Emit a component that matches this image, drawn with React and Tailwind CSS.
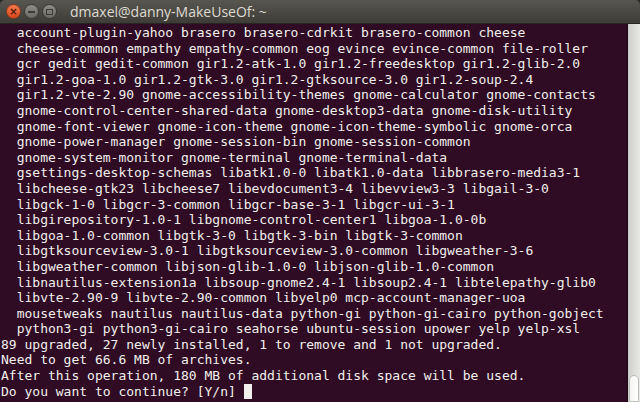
import React from 'react';

const lines = [
  '  account-plugin-yahoo brasero brasero-cdrkit brasero-common cheese',
  '  cheese-common empathy empathy-common eog evince evince-common file-roller',
  '  gcr gedit gedit-common gir1.2-atk-1.0 gir1.2-freedesktop gir1.2-glib-2.0',
  '  gir1.2-goa-1.0 gir1.2-gtk-3.0 gir1.2-gtksource-3.0 gir1.2-soup-2.4',
  '  gir1.2-vte-2.90 gnome-accessibility-themes gnome-calculator gnome-contacts',
  '  gnome-control-center-shared-data gnome-desktop3-data gnome-disk-utility',
  '  gnome-font-viewer gnome-icon-theme gnome-icon-theme-symbolic gnome-orca',
  '  gnome-power-manager gnome-session-bin gnome-session-common',
  '  gnome-system-monitor gnome-terminal gnome-terminal-data',
  '  gsettings-desktop-schemas libatk1.0-0 libatk1.0-data libbrasero-media3-1',
  '  libcheese-gtk23 libcheese7 libevdocument3-4 libevview3-3 libgail-3-0',
  '  libgck-1-0 libgcr-3-common libgcr-base-3-1 libgcr-ui-3-1',
  '  libgirepository-1.0-1 libgnome-control-center1 libgoa-1.0-0b',
  '  libgoa-1.0-common libgtk-3-0 libgtk-3-bin libgtk-3-common',
  '  libgtksourceview-3.0-1 libgtksourceview-3.0-common libgweather-3-6',
  '  libgweather-common libjson-glib-1.0-0 libjson-glib-1.0-common',
  '  libnautilus-extension1a libsoup-gnome2.4-1 libsoup2.4-1 libtelepathy-glib0',
  '  libvte-2.90-9 libvte-2.90-common libyelp0 mcp-account-manager-uoa',
  '  mousetweaks nautilus nautilus-data python-gi python-gi-cairo python-gobject',
  '  python3-gi python3-gi-cairo seahorse ubuntu-session upower yelp yelp-xsl',
  '89 upgraded, 27 newly installed, 1 to remove and 1 not upgraded.',
  'Need to get 66.6 MB of archives.',
  'After this operation, 180 MB of additional disk space will be used.',
];

const App = () => {
  return (
    <div className="w-[640px] h-[402px] flex flex-col overflow-hidden bg-[#2a2926]">
      {/* Title bar */}
      <div className="h-[24px] shrink-0 flex items-center rounded-t-[5px] bg-gradient-to-b from-[#57564f] to-[#3d3c37] border-b border-[#262522]">
        <div className="flex items-center gap-[3px] pl-[6px]">
          <div className="w-[15px] h-[15px] rounded-full bg-gradient-to-b from-[#f47a4c] to-[#d8461c] border border-[#8a3a1c] flex items-center justify-center">
            <span className="text-[10px] leading-none font-bold text-[#4a1a08]" style={{ fontFamily: '"DejaVu Sans", sans-serif' }}>×</span>
          </div>
          <div className="w-[15px] h-[15px] rounded-full bg-gradient-to-b from-[#8f8d86] to-[#6b6964] border border-[#3a3935] flex items-center justify-center">
            <div className="w-[7px] h-[2px] bg-[#3b3a36]" />
          </div>
          <div className="w-[15px] h-[15px] rounded-full bg-gradient-to-b from-[#8f8d86] to-[#6b6964] border border-[#3a3935] flex items-center justify-center">
            <div className="w-[7px] h-[6px] border border-[#3b3a36]" />
          </div>
        </div>
        <span className="ml-[13px] text-[14px] font-medium text-[#dfdbd2]" style={{ fontFamily: '"Open Sans", sans-serif' }}>
          dmaxel@danny-MakeUseOf: ~
        </span>
      </div>

      {/* Terminal body */}
      <div className="flex-1 flex min-h-0">
        <div
          className="flex-1 bg-[#2f0b24] pl-[1px] pt-[1px] text-[13px] leading-[15.6px] text-[#f2f0ec] whitespace-pre overflow-hidden"
          style={{ fontFamily: '"DejaVu Sans Mono", monospace' }}
        >
          {lines.map((l, i) => (
            <div key={i}>{l}</div>
          ))}
          <div>
            Do you want to continue? [Y/n] <span className="inline-block w-[8px] h-[15px] align-[-3px] bg-[#f2f0ec]" />
          </div>
        </div>
        {/* Scrollbar */}
        <div className="w-[13px] shrink-0 flex flex-col justify-end bg-gradient-to-r from-[#cfcfcc] to-[#e8e8e6] border-l border-[#1a0612]">
          <div className="h-[27px] mx-[1px] rounded-t-[6px] bg-gradient-to-r from-[#f4f4f2] to-[#ffffff] border border-[#bdbdb9]" />
        </div>
      </div>
    </div>
  );
};

export default App;
